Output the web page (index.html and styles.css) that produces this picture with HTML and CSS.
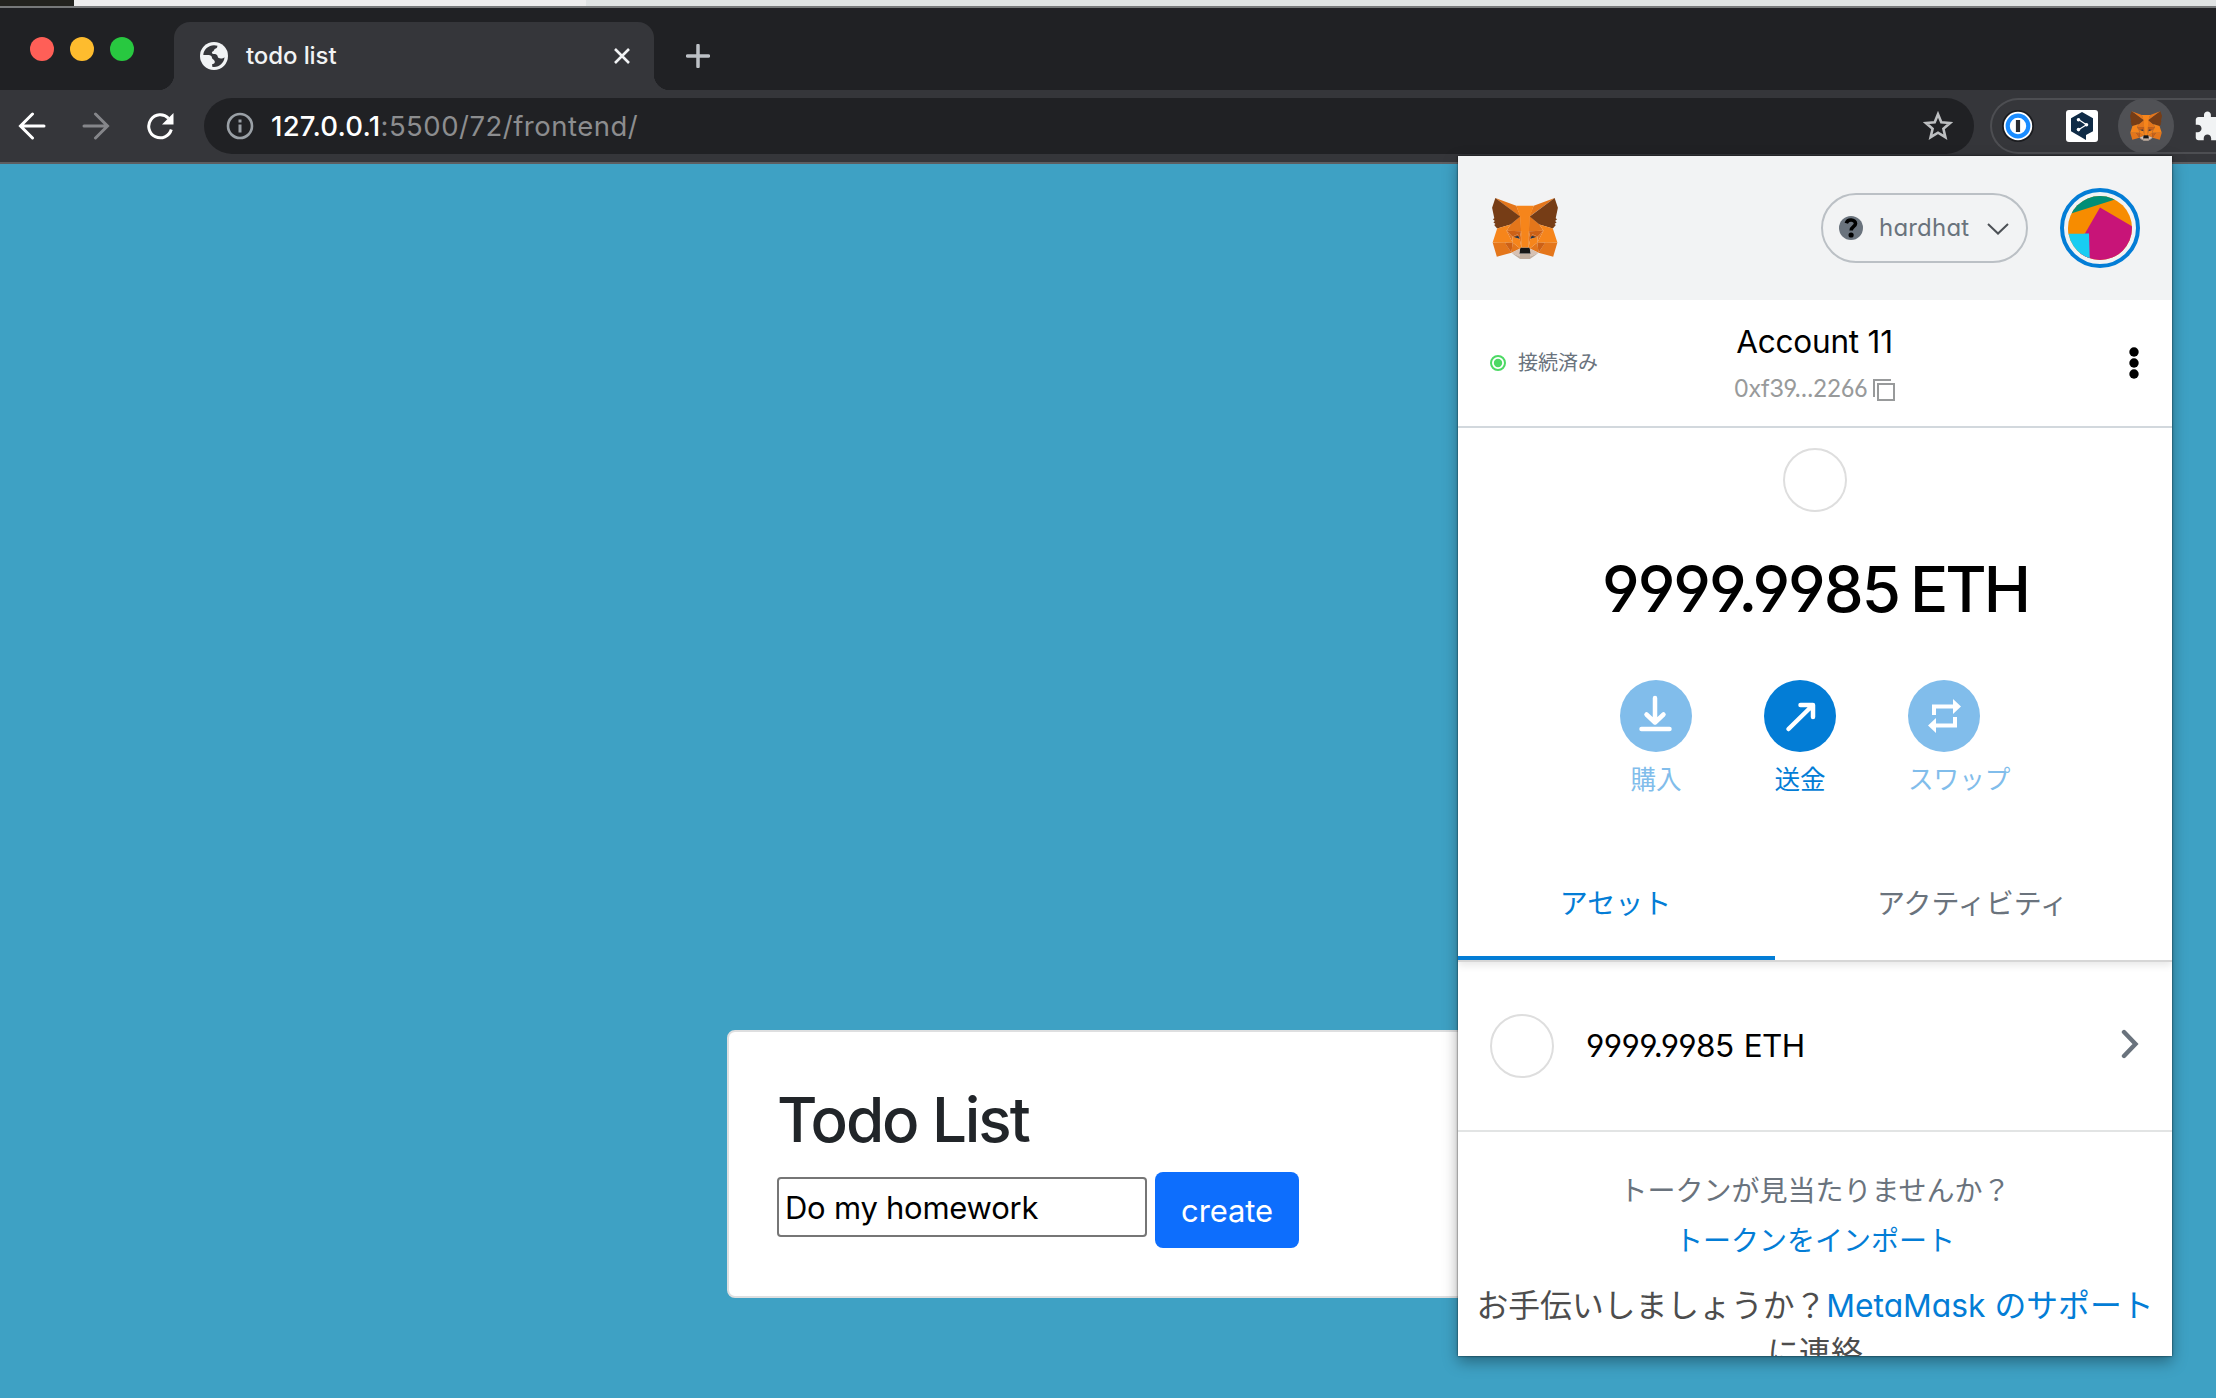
FILE: index.html
```html
<!DOCTYPE html>
<html lang="ja">
<head>
<meta charset="utf-8">
<title>todo list</title>
<link rel="stylesheet" href="styles.css">
</head>
<body>
<svg class="defs" width="0" height="0" aria-hidden="true">
  <symbol id="fox" viewBox="31.8 35.5 255 236.4">
    <g fill="#e4761b">
      <path d="M274.1 35.5L174.6 109.4 193 65.8zM44.4 35.5L143.1 110.1 125.6 65.8zM238.3 206.8L211.8 247.4 268.5 263 284.8 207.7zM33.9 207.7L50.1 263 106.8 247.4 80.3 206.8zM103.6 138.2L87.8 162.1 144.1 164.6 142.1 104.1zM214.9 138.2L175.9 103.4 174.6 164.6 230.8 162.1zM106.8 247.4L140.6 230.9 111.4 208.1zM177.9 230.9L211.8 247.4 207.1 208.1z"/>
    </g>
    <path fill="#d7c1b3" d="M211.8 247.4L177.9 230.9 180.6 253 180.3 262.3zM106.8 247.4L138.3 262.3 138.1 253 140.6 230.9z"/>
    <path fill="#cd6116" d="M106.8 247.4L111.6 206.8 80.3 207.7zM207 206.8L211.8 247.4 238.3 207.7zM230.8 162.1L174.6 164.6 179.8 193.5 188.1 176.1 208.1 185.2zM110.6 185.2L130.6 176.1 138.8 193.5 144.1 164.6 87.8 162.1z"/>
    <path fill="#e4751f" d="M87.8 162.1L111.4 208.1 110.6 185.2zM208.1 185.2L207.1 208.1 230.8 162.1zM144.1 164.6L138.8 193.5 145.4 227.6 146.9 182.7zM174.6 164.6L171.9 182.6 173.1 227.6 179.8 193.5z"/>
    <path fill="#f6851b" d="M179.8 193.5L173.1 227.6 177.9 230.9 207.1 208.1 208.1 185.2zM110.6 185.2L111.4 208.1 140.6 230.9 145.4 227.6 138.8 193.5z"/>
    <path fill="#cd6116" d="M138.8 193.5L110.6 185.2 130.5 176.1zM179.7 193.5L188 176.1 208 185.2z"/>
    <path fill="#233447" d="M138.8 193.5L116 186.300 133 181.500zM179.7 193.5L185.500 181.500 202.500 186.300z"/>
    <path fill="#c0ad9e" d="M180.3 262.3L180.6 253 178.1 250.8 140.4 250.8 138.1 253 138.3 262.3 106.8 247.4 117.8 256.4 140.1 271.9 178.4 271.9 200.8 256.4 211.8 247.4z"/>
    <path fill="#161616" d="M177.9 230.9L173.1 227.6 145.4 227.6 140.6 230.9 138.1 253 140.4 250.8 178.1 250.8 180.6 253z"/>
    <path fill="#763d16" d="M278.3 114.2L286.8 73.4 274.1 35.5 177.9 106.9 214.9 138.2 267.2 153.5 278.8 140 273.8 136.4 281.8 129.1 275.6 124.3 283.6 118.2zM31.8 73.4L40.3 114.2 34.9 118.2 42.9 124.3 36.8 129.1 44.8 136.4 39.8 140 51.3 153.5 103.6 138.2 140.6 106.9 44.4 35.5z"/>
    <path fill="#f6851b" d="M267.2 153.5L214.9 138.2 230.8 162.1 207.1 208.1 238.3 207.7 284.8 207.7zM103.6 138.2L51.3 153.5 33.9 207.7 80.3 207.7 111.4 208.1 87.8 162.1zM174.6 164.6L177.9 106.9 193.1 65.8 125.6 65.8 140.6 106.9 144.1 164.6 145.3 182.8 145.4 227.6 173.1 227.6 173.3 182.8z"/>
  </symbol>
</svg>

<div class="backdrop"></div>
<div class="tabstrip">
  <div class="lights"><i class="red"></i><i class="yellow"></i><i class="green"></i></div>
  <div class="tab">
    <svg class="globe" viewBox="0 0 28 28"><circle cx="14" cy="14" r="14" fill="#f1f3f4"/><path fill="#35363a" d="M17.500 3.700c-.4 1.200-.2 2.300-1.700 2.700-2 .4-1.500 2.500-3.200 3-1.400.6-.6 2.500.9 2.500 2.200 0 3.900.4 4.200 2.600.2 1.700 1.600 1.900 3.200 1.900 1.300 0 3-.2 3.600-1.200-.3 5.300-4.900 9.900-10.800 9.700l-1.500-.2v-2.600c2.200 0 3.300-2 2.200-3.400-.8-1.500-2.200-1.400-2.400-3-.2-1.800-1.600-2.700-3.300-2.700H3.300C3.500 7.500 8.500 3.200 14 3.200c1.300 0 2.400.2 3.500.5z"/></svg>
    <span class="tab-title">todo list</span>
    <svg class="close" viewBox="0 0 18 18"><path d="M2 2l14 14M16 2L2 16" stroke="#f1f3f4" stroke-width="2.600"/></svg>
  </div>
  <svg class="plus" viewBox="0 0 24 24"><path d="M12 1.500v21M1.500 12h21" stroke="#bdc1c6" stroke-width="3.500" stroke-linecap="round"/></svg>
</div>
<div class="toolbar">
  <div class="nav">
    <svg viewBox="0 0 28 28"><path d="M14.500 2L2.500 14l12 12M3 14h23" fill="none" stroke="#fff" stroke-width="3" stroke-linecap="round"/></svg>
    <svg viewBox="0 0 28 28"><path d="M13.500 2l12 12-12 12M25 14H2" fill="none" stroke="#85868a" stroke-width="3" stroke-linecap="round"/></svg>
    <svg viewBox="0 0 28 28"><path d="M25.300 17.500A11.500 11.500 0 1 1 22.500 6.300" fill="none" stroke="#fff" stroke-width="3"/><path d="M27.500 1v11.500H16z" fill="#fff"/></svg>
  </div>
  <div class="omnibox">
    <svg class="info" viewBox="0 0 28 28"><circle cx="14" cy="14" r="12" fill="none" stroke="#9aa0a6" stroke-width="2.600"/><path d="M14 12.500v8M14 7.500v3" stroke="#9aa0a6" stroke-width="3"/></svg>
    <span class="url">127.0.0.1<span class="path">:5500/72/frontend/</span></span>
    <svg class="star" viewBox="0 0 30 30"><path d="M15 3.200l3.300 8.100 8.700.700-6.600 5.700 2 8.500-7.400-4.500-7.400 4.500 2-8.500L3 12l8.700-.700z" fill="none" stroke="#bdbfc1" stroke-width="2.600"/></svg>
  </div>
  <div class="extensions">
    <svg class="onepass" viewBox="0 0 32 32"><circle cx="16" cy="16" r="16" fill="#1b1c1f"/><circle cx="16" cy="16" r="14.200" fill="#fff"/><circle cx="16" cy="16" r="10.300" fill="#fff" stroke="#1a8cff" stroke-width="4.200"/><path d="M16 10v12" stroke="#2b2c30" stroke-width="4.200"/></svg>
    <svg class="deepl" viewBox="0 0 32 32"><rect width="32" height="32" rx="3" fill="#fff"/><path fill="#0f2b46" d="M16 2l11 6.200v13L20 25v5l-5.500-3.200L5 21.200v-13z"/><path d="M12.500 9.500l8 5.300-8 5" fill="none" stroke="#fff" stroke-width="1.200"/><g fill="#fff"><circle cx="12.500" cy="9.800" r="1.800"/><circle cx="20.500" cy="14.800" r="1.800"/><circle cx="12.500" cy="19.600" r="1.800"/></g></svg>
    <span class="fox-button"><svg class="fox-small"><use href="#fox"/></svg></span>
    <svg class="puzzle" viewBox="0 0 24 24"><path fill="#f1f3f4" d="M20.500 11H19V7c0-1.100-.9-2-2-2h-4V3.500C13 2.120 11.880 1 10.500 1S8 2.120 8 3.500V5H4c-1.100 0-1.990.9-1.990 2v3.800H3.500c1.490 0 2.700 1.210 2.700 2.700s-1.210 2.700-2.700 2.700H2V20c0 1.100.9 2 2 2h3.800v-1.500c0-1.490 1.210-2.700 2.700-2.700 1.490 0 2.700 1.210 2.700 2.700V22H17c1.100 0 2-.9 2-2v-4h1.500c1.380 0 2.500-1.120 2.500-2.500S21.880 11 20.500 11z"/></svg>
  </div>
</div>

<main class="page">
  <section class="card">
    <h1>Todo List</h1>
    <div class="form">
      <input class="task" type="text" value="Do my homework">
      <button class="create">create</button>
    </div>
  </section>
</main>

<aside class="popup">
  <header class="wallet-head">
    <svg class="logo"><use href="#fox"/></svg>
    <div class="network">
      <svg class="help" viewBox="0 0 24 24"><circle cx="12" cy="12" r="12" fill="#6a737d"/><path d="M7.300 7.200c.8-2.400 2.700-3.300 4.900-3.200 2.500.1 4.400 1.600 4.300 3.700-.1 3.100-4.300 3-4.300 6.800" fill="none" stroke="#000" stroke-width="3.600"/><circle cx="12.100" cy="19" r="2.600"/></svg>
      <span>hardhat</span>
      <svg class="down" viewBox="0 0 22 12"><path d="M1 1l10 9.500L21 1" fill="none" stroke="#4d5156" stroke-width="2"/></svg>
    </div>
    <svg class="avatar" viewBox="0 0 80 80"><clipPath id="disc"><circle cx="40" cy="40" r="32"/></clipPath><circle cx="40" cy="40" r="38" fill="none" stroke="#037dd6" stroke-width="4"/><g clip-path="url(#disc)"><path fill="#f78c00" d="M0 0h80v80H0z"/><path fill="#018e77" d="M0 0h80L55 11.500 0 29z"/><path fill="#c81478" d="M40 19.500L80 43v37H20V54z"/><path fill="#18cdf2" d="M0 45.500h29L30 80H0z"/><path fill="#f78c00" d="M0 40h24v5.500H0z"/></g></svg>
  </header>
  <section class="account">
    <div class="connected"><svg viewBox="0 0 16 16"><circle cx="8" cy="8" r="7" fill="none" stroke="#4cd964" stroke-width="2"/><circle cx="8" cy="8" r="4.200" fill="#4cd964"/></svg><span>接続済み</span></div>
    <div class="identity">
      <div class="name">Account 11</div>
      <div class="address"><span>0xf39...2266</span><svg viewBox="0 0 22 22"><path d="M1 18V1h17M5 5h16v16H5z" fill="none" stroke="#989a9b" stroke-width="2"/></svg></div>
    </div>
    <svg class="menu" viewBox="0 0 10 32"><circle cx="5" cy="5" r="4.700"/><circle cx="5" cy="16" r="4.700"/><circle cx="5" cy="27" r="4.700"/></svg>
  </section>
  <section class="overview">
    <div class="token"></div>
    <div class="balance"><span class="amount">9999.9985</span><span class="unit">ETH</span></div>
    <div class="actions">
      <div class="action muted"><svg viewBox="0 0 72 72"><circle cx="36" cy="36" r="36"/><path d="M35 18v24M26.500 34.500L35 42.500l8.500-8M21.500 49h28"/></svg><span>購入</span></div>
      <div class="action"><svg viewBox="0 0 72 72"><circle cx="36" cy="36" r="36"/><path d="M24.500 49L48 26M36.500 25H49v12"/></svg><span>送金</span></div>
      <div class="action muted left"><svg viewBox="0 0 72 72"><circle cx="36" cy="36" r="36"/><path class="swap" d="M24 35V24.500h21V19l8 7.500-8 7.500v-5.500H28V35zM49 37v10.500H28V53l-8-7.500 8-7.500v5.500h17V37z"/></svg><span>スワップ</span></div>
    </div>
  </section>
  <nav class="tabs"><span class="active">アセット</span><span class="idle">アクティビティ</span></nav>
  <section class="asset">
    <div class="token"></div>
    <span>9999.9985 ETH</span>
    <svg viewBox="0 0 18 30"><path d="M3 3l11.500 12L3 27" fill="none" stroke="#6a737d" stroke-width="4.400" stroke-linecap="round"/></svg>
  </section>
  <footer class="foot">
    <div class="missing">トークンが見当たりませんか？</div>
    <div class="import">トークンをインポート</div>
    <div class="support">お手伝いしましょうか？<a>MetaMask のサポート</a><br>に連絡</div>
  </footer>
</aside>
</body>
</html>
```

FILE: styles.css
```css
* { box-sizing: border-box; }
body {
  margin: 0;
  width: 2216px;
  height: 1398px;
  overflow: hidden;
  position: relative;
  display: flex;
  flex-direction: column;
  background: #3ea1c4;
  font-family: Inter, "Noto Sans CJK JP", sans-serif;
}
svg { display: block; flex: none; }
.defs { position: absolute; }

/* Browser chrome */
.backdrop {
  height: 8px;
  flex: none;
  background: linear-gradient(90deg, #23231f 74px, #ededed 74px, #ededed 586px, #e0e3e3 586px);
  border-bottom: 2px solid #77797a;
}
.tabstrip {
  height: 82px;
  flex: none;
  display: flex;
  padding: 14px 0 0 30px;
  background: #202124;
}
.lights { display: flex; gap: 16px; padding-top: 15px; width: 144px; }
.lights i { width: 24px; height: 24px; border-radius: 50%; }
.red { background: #ff5f57; }
.yellow { background: #febc2e; }
.green { background: #28c840; }
.tab {
  position: relative;
  width: 480px;
  height: 68px;
  display: flex;
  align-items: center;
  padding: 0 23px 0 26px;
  background: #35363a;
  border-radius: 16px 16px 0 0;
}
.tab::before, .tab::after {
  content: "";
  position: absolute;
  bottom: 0;
  width: 16px;
  height: 16px;
}
.tab::before { left: -16px; background: radial-gradient(circle at 0 0, #202124 16px, #35363a 16.5px); }
.tab::after { right: -16px; background: radial-gradient(circle at 100% 0, #202124 16px, #35363a 16.5px); }
.globe { width: 28px; height: 28px; }
.tab-title { margin: -1px 0 0 18px; flex: 1; color: #f1f3f4; font-size: 24px; font-weight: 500; letter-spacing: -.1px; white-space: nowrap; }
.close { width: 18px; height: 18px; }
.plus { width: 24px; height: 24px; margin: 22px 0 0 32px; }
.toolbar {
  height: 74px;
  flex: none;
  display: flex;
  padding-top: 8px;
  background: #35363a;
  border-bottom: 2px solid #5d5e61;
}
.nav { width: 204px; height: 56px; display: flex; align-items: center; gap: 36px; padding-left: 18px; }
.nav svg { width: 28px; height: 28px; }
.omnibox {
  width: 1770px;
  height: 56px;
  display: flex;
  align-items: center;
  padding: 0 21px 0 22px;
  border-radius: 28px;
  background: #202124;
}
.info { width: 28px; height: 28px; }
.url { flex: 1; margin-left: 17px; color: #fff; font-size: 27.5px; font-weight: 500; letter-spacing: .25px; white-space: nowrap; }
.path { color: #8c8d8f; font-weight: 400; letter-spacing: .5px; }
.star { width: 30px; height: 30px; }
.extensions {
  width: 226px;
  flex: none;
  height: 56px;
  margin-left: 16px;
  display: flex;
  align-items: center;
  border: 2px solid #4d4e52;
  border-right: 0;
  border-radius: 28px 0 0 28px;
  padding-left: 10px;
}
.onepass, .deepl { width: 32px; height: 32px; }
.deepl { margin-left: 32px; }
.fox-button {
  width: 56px;
  height: 56px;
  flex: none;
  margin-left: 20px;
  border-radius: 50%;
  background: #505155;
  display: flex;
  align-items: center;
  justify-content: center;
}
.fox-small { width: 32px; height: 30px; }
.puzzle { width: 33px; height: 33px; margin-left: 19px; }

/* Todo page */
.page { flex: 1; padding: 866px 0 0 727px; }
.card {
  width: 762px;
  height: 268px;
  padding: 49px 48px;
  background: #fff;
  border: 2px solid #dedfe0;
  border-radius: 8px;
}
h1 { margin: 0 0 13px; font-size: 62px; line-height: 78px; font-weight: 550; letter-spacing: -2.1px; color: #212529; }
.form { display: flex; gap: 8px; }
.task {
  width: 370px;
  height: 60px;
  margin-top: 5px;
  padding: 0 6px;
  border: 2px solid #767676;
  border-radius: 4px;
  font: 31px Inter, sans-serif;
  letter-spacing: -.25px;
  color: #000;
}
.create {
  width: 144px;
  height: 76px;
  border: 0;
  border-radius: 8px;
  padding: 0;
  background: #0d6efd;
  color: #fff;
  font: 31px Inter, sans-serif;
  letter-spacing: -.1px;
}

/* Wallet popup, floating over page and toolbar */
.popup {
  position: absolute;
  left: 1458px;
  top: 156px;
  width: 714px;
  height: 1200px;
  overflow: hidden;
  background: #fff;
  box-shadow: 0 0 2px rgba(0, 0, 0, .7), 0 6px 14px rgba(0, 0, 0, .35);
  font-feature-settings: "cv11", "cv03", "cv04";
}
.wallet-head { height: 144px; display: flex; align-items: center; padding: 0 32px 0 34px; background: #f2f3f4; }
.logo { width: 66px; height: 61px; }
.network {
  width: 207px;
  height: 70px;
  margin: 0 32px 0 263px;
  padding: 0 17px 0 16px;
  display: flex;
  align-items: center;
  border: 2px solid #bbc0c5;
  border-radius: 35px;
  color: #6a737d;
  font-size: 24px;
}
.help { width: 24px; height: 24px; }
.network span { flex: 1; margin: -1px 0 0 16px; letter-spacing: .2px; }
.down { width: 22px; height: 12px; margin-top: 1px; }
.avatar { width: 80px; height: 80px; }
.account {
  height: 128px;
  display: grid;
  grid-template-columns: 200px 1fr 200px;
  align-items: center;
  padding: 0 33px 0 32px;
  border-bottom: 2px solid #d2d8dd;
}
.connected { display: flex; align-items: center; gap: 12px; font-size: 20px; color: #6a737d; }
.connected svg { width: 16px; height: 16px; }
.connected span { margin-top: -3px; }
.identity { display: flex; flex-direction: column; align-items: center; padding-top: 7px; }
.name { font-size: 31.5px; line-height: 44px; letter-spacing: -.2px; white-space: nowrap; }
.address { display: flex; gap: 6px; align-items: center; font-size: 24px; line-height: 50px; color: #989a9b; letter-spacing: -.7px; }
.address svg { width: 22px; height: 22px; margin-top: 2px; }
.menu { width: 10px; height: 32px; justify-self: end; }
.overview { height: 414px; display: flex; flex-direction: column; align-items: center; padding-top: 20px; }
.token { width: 64px; height: 64px; flex: none; border: 2px solid #dedede; border-radius: 50%; }
.balance { display: flex; gap: 11px; margin-top: 37px; font-size: 63.5px; font-weight: 500; line-height: 80px; }
.amount { letter-spacing: -2px; }
.unit { letter-spacing: -3px; }
.actions { display: flex; gap: 72px; margin: 51px 30px 0 0; }
.action { width: 72px; display: flex; flex-direction: column; align-items: center; font-size: 25.6px; line-height: 38px; color: #037dd6; white-space: nowrap; }
.action.left { align-items: flex-start; }
.action.muted { color: #81bdeb; }
.action svg { width: 72px; height: 72px; margin-bottom: 9px; }
.action circle { fill: currentColor; }
.action path { fill: none; stroke: #fff; stroke-width: 4.5; stroke-linecap: round; stroke-linejoin: round; }
.action .swap { fill: #fff; stroke: none; }
.tabs {
  height: 120px;
  display: grid;
  grid-template-columns: 317px 1fr;
  font-size: 28px;
  line-height: 40px;
  text-align: center;
  border-bottom: 2px solid #d6d6d6;
  box-shadow: 0 3px 8px rgba(0, 0, 0, .1);
  clip-path: inset(0 0 -14px 0);
}
.tabs span { padding: 42px 2px 0 0; }
.active { color: #037dd6; border-bottom: 4px solid #037dd6; }
.idle { color: #6a737d; }
.asset {
  height: 170px;
  display: flex;
  align-items: center;
  padding: 0 32px;
  border-bottom: 2px solid #e2e4e4;
  font-size: 31.5px;
}
.asset span { flex: 1; margin: -2px 0 0 32px; letter-spacing: -.6px; word-spacing: 2px; }
.asset svg { width: 18px; height: 30px; margin: -4px 1px 0 0; }
.foot { padding-top: 34px; text-align: center; font-size: 28px; line-height: 50px; color: #6a737d; white-space: nowrap; }
.import { color: #037dd6; }
.support { margin-top: 16px; font-size: 31.8px; line-height: 47px; color: #4d4d4d; }
.support a { color: #037dd6; }
```
